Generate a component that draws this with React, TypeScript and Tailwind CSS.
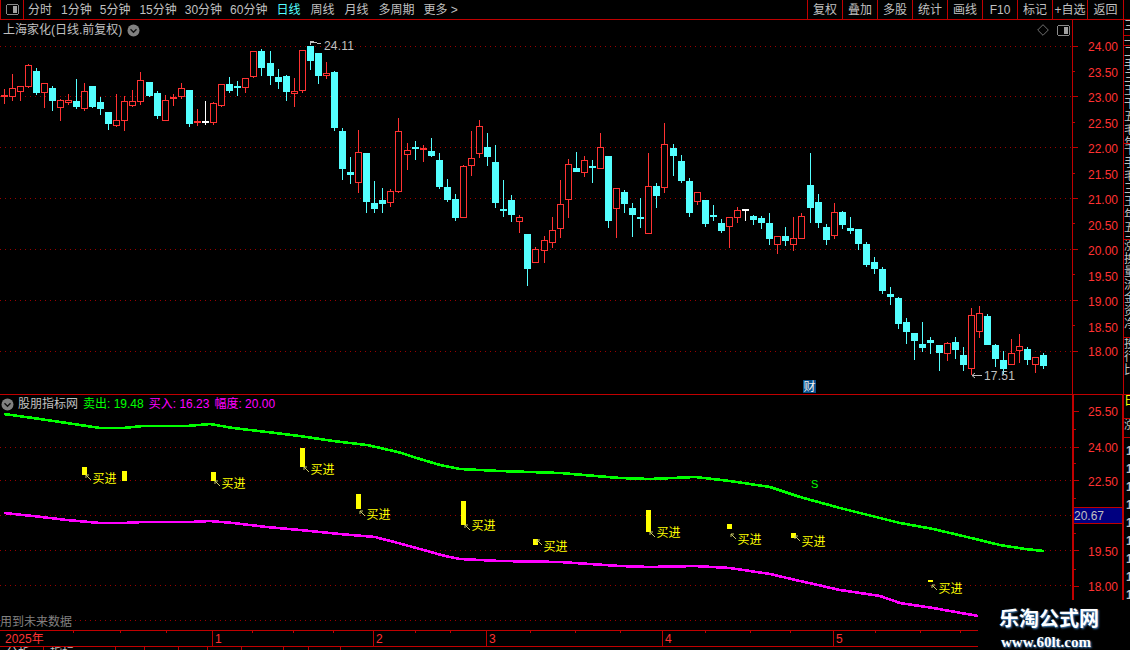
const FONT = '"Liberation Sans","Noto Sans CJK SC",sans-serif';
const RED = "#ff3232";
const CYAN = "#54ffff";
const LINE = "#c00000";
const GRID = "#9a0000";

type C = [string, number, number, number, number];
const D: C[] = [
  ["r",95,97,89,104],["r",88,97,74,101],["r",86,92,86,101],["r",65,87,64,88],["c",71,93,68,95],
  ["r",83,93,83,108],["c",88,101,86,111],["r",100,108,99,121],["r",100,103,94,105],["c",101,107,79,109],
  ["r",91,109,83,111],["c",86,107,86,108],["c",102,109,97,115],["c",112,124,112,130],["r",120,126,94,127],
  ["r",101,121,96,131],["r",101,106,90,107],["r",80,102,72,105],["c",82,96,82,97],["c",93,116,91,119],
  ["r",100,121,95,121],["r",97,99,94,106],["r",88,97,83,99],["c",90,124,90,127],["r",121,123,109,126],
  ["w",121,123,101,125],["r",103,123,102,125],["r",84,106,84,107],["c",84,91,77,93],["c",86,88,81,96],
  ["r",78,88,78,93],["r",51,77,51,78],["c",51,68,49,76],["c",63,76,51,85],["c",77,82,69,89],
  ["c",76,92,75,101],["r",91,94,78,107],["r",50,91,50,93],["c",46,61,46,70],["c",53,76,53,84],
  ["r",73,76,62,79],["c",72,128,71,131],["c",131,169,128,180],["c",172,175,157,184],["r",152,183,130,193],
  ["c",153,202,153,213],["c",203,209,181,213],["c",200,204,188,213],["r",191,203,189,207],["r",131,192,118,193],
  ["r",150,155,143,170],["c",147,149,141,160],["r",148,150,145,162],["c",151,156,138,157],["c",160,187,153,189],
  ["c",187,200,179,202],["c",199,218,194,221],["r",166,218,165,218],["r",158,166,131,176],["r",126,154,120,158],
  ["c",147,157,133,166],["c",162,203,145,208],["c",209,211,180,217],["c",200,215,195,222],["r",217,222,215,233],
  ["c",234,269,234,286],["r",249,263,247,263],["r",240,251,236,263],["r",230,243,217,248],["r",204,229,180,238],
  ["r",164,200,159,218],["c",168,172,152,172],["r",160,173,156,177],["c",166,168,160,183],["r",147,169,133,169],
  ["c",156,221,156,228],["r",188,209,188,238],["c",192,204,190,213],["c",208,215,203,237],["c",217,219,198,228],
  ["r",186,234,153,234],["c",186,196,183,208],["r",144,188,123,193],["c",148,156,144,176],["c",161,181,155,183],
  ["c",181,213,178,217],["r",192,202,192,205],["c",200,224,200,227],["c",215,217,205,221],["c",223,231,219,233],
  ["r",217,227,217,248],["r",210,218,207,223],["w",209,211,209,221],["c",216,220,215,225],["c",218,223,216,229],
  ["c",223,239,213,245],["r",236,245,236,254],["c",236,241,227,246],["r",238,245,217,251],["r",216,239,213,239],
  ["c",185,208,153,223],["c",202,223,194,228],["c",227,240,224,245],["r",212,236,203,239],["c",212,225,211,229],
  ["c",228,231,217,234],["c",229,244,229,250],["c",244,265,242,267],["c",262,269,257,274],["c",269,291,267,294],
  ["c",294,297,287,305],["c",298,324,297,329],["c",322,332,318,344],["c",333,341,333,360],["c",344,348,322,352],
  ["c",340,343,337,354],["c",345,353,345,371],["r",343,354,342,361],["c",342,350,337,359],["c",355,365,347,371],
  ["r",315,369,308,375],["r",313,332,306,338],["c",316,345,314,345],["c",345,359,344,367],["c",360,369,351,374],
  ["r",353,365,339,365],["r",346,351,334,363],["c",349,360,347,365],["r",357,365,357,373],["c",355,366,353,369],
];
const shifts = [18, 33, 50, 67, 83, 100, 116];
const cx = (i: number) => 4 + 8 * i + shifts.filter((s) => i >= s).length;

const green = "4,414 33,418 67,423 100,428 123,428 143,426 187,426 210,424 233,428 267,432 300,436 333,441 367,445 398,452 420,459 440,465 460,469 500,471 560,473 620,478 650,479 695,477 730,481 770,487 800,497 840,508 880,518 900,523 933,529 967,537 1000,545 1025,549 1044,551";
const magenta = "4,513 33,516 67,520 100,523 123,523 143,522 190,522 210,521 233,523 267,527 300,530 340,534 375,537 398,543 420,549 445,556 460,559 500,561 560,562 620,566 650,567 695,566 730,568 770,574 800,581 840,590 880,596 900,603 933,608 967,614 978,616";

const upperLabels: [string, number][] = [["24.00",46],["23.50",72],["23.00",97],["22.50",123],["22.00",148],["21.50",174],["21.00",199],["20.50",225],["20.00",250],["19.50",276],["19.00",301],["18.50",327],["18.00",351]];
const lowerLabels: [string, number][] = [["25.50",411],["24.00",447],["22.50",481],["19.50",551],["18.00",586]];

// x, blockTop, blockBottom, arrowY, textX, textY
const buys: [number, number, number, number, number, number][] = [
  [82,467,475,475,93,478],[211,472,481,481,222,483],[300,448,467,467,311,469],[356,494,509,511,367,514],
  [461,501,525,525,472,525],[533,539,545,540,544,546],[646,510,532,532,657,532],[727,524,529,534,738,539],
  [791,533,538,536,802,541],[928,580,582,585,939,588],
];

const periods: [string, string][] = [["1分钟","ml-[9px]"],["5分钟","ml-[8px]"],["15分钟","ml-[9px]"],["30分钟","ml-[8px]"],["60分钟","ml-[8px]"]];
const periods2 = ["周线", "月线", "多周期"];
const rightBtns = ["复权","叠加","多股","统计","画线","F10","标记","+自选"];

function SplitIcon() {
  return (
    <svg width="13" height="11" viewBox="0 0 13 11" shapeRendering="crispEdges">
      <rect x="0.5" y="0.5" width="12" height="10" rx="2" fill="#000" stroke="#8a8a8a" />
      <rect x="7" y="2" width="4" height="7" fill="#a0a0a0" />
    </svg>
  );
}

function ChevronDot() {
  return (
    <svg width="13" height="13" viewBox="0 0 13 13">
      <circle cx="6.5" cy="6.5" r="6" fill="#808080" />
      <path d="M3.5 5.2 L6.5 8.2 L9.5 5.2" fill="none" stroke="#111" strokeWidth="1.4" />
    </svg>
  );
}

function Candles() {
  return (
    <g shapeRendering="crispEdges">
      {D.map(([k, top, bot, hi, lo], i) => {
        const c = cx(i);
        const color = k === "c" ? CYAN : k === "w" ? "#ffffff" : RED;
        const flat = bot - top <= 2;
        return (
          <g key={i}>
            <rect x={c} y={hi} width={1} height={lo - hi} fill={color} />
            {k === "r" && !flat ? (
              <rect x={c - 2.5} y={top + 0.5} width={6} height={bot - top - 1} fill="#000" stroke={color} />
            ) : (
              <rect x={c - 3} y={top} width={7} height={bot - top} fill={color} />
            )}
          </g>
        );
      })}
    </g>
  );
}

function StripSection({ h, chars, color = "#c0c0c0" }: { h: string; chars: string; color?: string }) {
  return (
    <div className={`${h} border-b border-[#c00000] overflow-hidden`}>
      {chars.split("").map((t, i) => (
        <div key={i} className="text-[12px] leading-[13px] whitespace-nowrap" style={{ color }}>{t}</div>
      ))}
    </div>
  );
}

export default function App() {
  return (
    <div className="relative flex h-[650px] w-[1130px] flex-col overflow-hidden bg-black" style={{ fontFamily: FONT }}>
      {/* toolbar */}
      <div className="flex h-[20px] items-center justify-between border-b border-[#c00000] text-[12px] leading-none text-[#c0c0c0]">
        <div className="flex items-center">
          <div className="flex h-[19px] w-[24px] items-center justify-center border-x border-[#c00000]"><SplitIcon /></div>
          <span className="ml-[4px]">分时</span>
          {periods.map(([t, m]) => (<span key={t} className={m}>{t}</span>))}
          <span className="ml-[9px] text-[#54ffff]">日线</span>
          {periods2.map((t) => (<span key={t} className="ml-[10px]">{t}</span>))}
          <span className="ml-[9px]">更多 &gt;</span>
        </div>
        <div className="flex h-[19px]">
          {rightBtns.map((t) => (
            <div key={t} className="flex w-[35px] items-center justify-center border-l border-[#c00000] whitespace-nowrap">{t}</div>
          ))}
          <div className="flex w-[37px] items-center justify-center border-x border-[#c00000]">返回</div>
          <div className="w-[6px]" />
        </div>
      </div>

      <div className="flex">
        <div className="w-[1124px]">
          {/* price pane */}
          <div className="relative h-[374px]">
            <svg width="1124" height="374" viewBox="0 20 1124 374" className="block">
              <g shapeRendering="crispEdges">
                {[46, 96, 147, 198, 249, 300, 351].map((y) => (
                  <g key={y}>
                    <line x1="0" x2="1072" y1={y + 0.5} y2={y + 0.5} stroke={GRID} strokeDasharray="1 4" />
                    <rect x="1073" y={y} width="5" height="1" fill={LINE} />
                  </g>
                ))}
                {[71, 122, 173, 223, 274, 325].map((y) => (<rect key={y} x="1073" y={y} width="2" height="1" fill={LINE} />))}
                <rect x="1072" y="20" width="1" height="374" fill={LINE} />
                <rect x="1123" y="20" width="1" height="374" fill={LINE} />
              </g>
              <Candles />
              {upperLabels.map(([t, y]) => (
                <text key={t} x="1118" y={y + 5} textAnchor="end" fontSize="12" fill={RED}>{t}</text>
              ))}
              <path d="M310.5 45 V41 H314 M311 42 H316 L318 44 L321 43" fill="none" stroke="#c0c0c0" strokeWidth="1" shapeRendering="crispEdges" />
              <text x="324" y="50" fontSize="12" fill="#c0c0c0" letterSpacing="0.2">24.11</text>
              <path d="M972 375.5 H982 M972 375.5 L975 373 M972 375.5 L975 378" fill="none" stroke="#c0c0c0" strokeWidth="1" />
              <text x="984" y="380" fontSize="12" fill="#c0c0c0" letterSpacing="0.2">17.51</text>
              <rect x="803" y="380" width="13" height="13" fill="#08508c" />
              <text x="803.5" y="391" fontSize="12" fill="#f0f0f0">财</text>
            </svg>
            <div className="absolute left-[3px] top-[1px] flex items-center text-[12px] leading-[18px] text-[#c0c0c0]">
              <span>上海家化(日线.前复权)</span>
              <span className="ml-[5px] flex"><ChevronDot /></span>
            </div>
            <div className="absolute right-[54px] top-[4px] flex items-center gap-[8px]">
              <svg width="12" height="12" viewBox="0 0 12 12"><path d="M6 0.7 L11.3 6 L6 11.3 L0.7 6 Z" fill="none" stroke="#707070" /></svg>
              <SplitIcon />
            </div>
          </div>

          {/* indicator pane */}
          <div className="relative h-[236px]">
            <svg width="1124" height="236" viewBox="0 394 1124 236" className="block">
              <g shapeRendering="crispEdges">
                <rect x="0" y="394" width="1124" height="1" fill={LINE} />
                {[447, 480, 515, 550, 585, 620].map((y) => (
                  <line key={y} x1="0" x2="1072" y1={y + 0.5} y2={y + 0.5} stroke={GRID} strokeDasharray="1 4" />
                ))}
                {[447, 480, 515, 550, 586, 411].map((y) => (<rect key={y} x="1074" y={y} width="5" height="1" fill={LINE} />))}
                {[429, 463, 498, 533, 569].map((y) => (<rect key={y} x="1074" y={y} width="2" height="1" fill={LINE} />))}
                <rect x="1072" y="394" width="2" height="236" fill={LINE} />
                <rect x="1122" y="394" width="2" height="236" fill={LINE} />
                <polyline points={green} fill="none" stroke="#00ff00" strokeWidth="2.6" />
                <polyline points={magenta} fill="none" stroke="#ff00ff" strokeWidth="2.6" />
                {buys.map(([x, t, b]) => (<rect key={x} x={x} y={t} width="5" height={b - t} fill="#ffff00" />))}
                <rect x="122" y="471" width="5" height="10" fill="#ffff00" />
              </g>
              {buys.map(([x, , , ay, tx, ty]) => (
                <g key={x}>
                  <path d={`M${x + 4} ${ay} L${x + 9} ${ay + 5} M${x + 4} ${ay} h3 M${x + 4} ${ay} v3`} fill="none" stroke="#c8c864" strokeWidth="1" />
                  <text x={tx - 0.5} y={ty + 5} fontSize="12" fill="#ffff00">买进</text>
                </g>
              ))}
              <text x="811" y="488" fontSize="11" fill="#00ff00">S</text>
              {lowerLabels.map(([t, y]) => (
                <text key={t} x="1118" y={y + 5} textAnchor="end" fontSize="12" fill={RED}>{t}</text>
              ))}
              <rect x="1074" y="507" width="48" height="16" fill="#000080" />
              <rect x="1074" y="507" width="48" height="1" fill={LINE} shapeRendering="crispEdges" />
              <rect x="1074" y="523" width="48" height="1" fill={LINE} shapeRendering="crispEdges" />
              <text x="1074" y="520" fontSize="12" fill="#c0c0c0">20.67</text>
            </svg>
            <div className="absolute left-[1px] top-[2px] flex items-center text-[12px] leading-[16px] text-[#c0c0c0]">
              <ChevronDot />
              <span className="ml-[4px]">股朋指标网</span>
              <span className="ml-[5px] text-[#00ff00]">卖出: 19.48</span>
              <span className="ml-[5px] text-[#ff00ff]">买入: 16.23</span>
              <span className="ml-[5px] text-[#ff00ff]">幅度: 20.00</span>
            </div>
            <div className="absolute bottom-[1px] left-0 text-[12px] leading-[14px] text-[#808080]">用到未来数据</div>
          </div>

          {/* time axis */}
          <svg width="1124" height="17" viewBox="0 630 1124 17" className="block">
            <g shapeRendering="crispEdges">
              <rect x="0" y="630" width="1124" height="1" fill={LINE} />
              <rect x="0" y="646" width="1124" height="1" fill={LINE} />
              {[212, 373, 486, 662, 833].map((x) => (<rect key={x} x={x} y="630" width="1" height="16" fill={LINE} />))}
              {[73, 120, 166, 252, 293, 333, 415, 450, 530, 575, 620, 705, 750, 790, 875, 920, 960].map((x) => (
                <rect key={x} x={x} y="631" width="1" height="2" fill={LINE} />
              ))}
            </g>
            <text x="5" y="643" fontSize="12" fill={RED}>2025年</text>
            {([["1",215],["2",376],["3",489],["4",665],["5",836]] as [string, number][]).map(([t, x]) => (
              <text key={t} x={x} y="643" fontSize="12" fill={RED}>{t}</text>
            ))}
          </svg>

          {/* tab strip, only its top edge shows */}
          <div className="flex h-[3px] overflow-hidden text-[12px] leading-[12px] text-[#c0c0c0]">
            <div className="w-[43px] pl-[6px]">分析</div>
            <div className="w-[72px] border-l border-[#c00000] pl-[6px]">指标</div>
            <div className="w-[29px] border-l border-[#c00000]" />
            <div className="w-[34px] border-l border-[#c00000]" />
            <div className="w-[29px] border-l border-[#c00000]" />
            <div className="w-[34px] border-l border-[#c00000]" />
            <div className="w-[42px] border-l border-[#c00000]" />
            <div className="w-[25px] border-l border-[#c00000]" />
            <div className="w-[32px] border-l border-[#c00000]" />
            <div className="w-[24px] border-l border-[#c00000]" />
          </div>
        </div>

        {/* clipped side panel */}
        <div className="h-[630px] w-[6px] overflow-hidden">
          <StripSection h="h-[16px]" chars="三" />
          <StripSection h="h-[10px]" chars="一" />
          <StripSection h="h-[98px]" chars="二手三王干五毛年" />
          <StripSection h="h-[96px]" chars="千手毛三王年五二" />
          <StripSection h="h-[98px]" chars="涨换量流金资净" />
          <StripSection h="h-[57px]" chars="投行比" />
          <StripSection h="h-[24px]" chars="日" color="#ffff00" />
          <StripSection h="h-[19px]" chars="涨" />
          <div className="pt-[7px]">
            {Array.from({ length: 9 }).map((_, i) => (
              <div key={i} className="h-[18px] pl-[2px] text-[12px] font-bold leading-[13px] text-[#c0c0c0]">1</div>
            ))}
          </div>
        </div>
      </div>

      {/* watermark */}
      <div className="absolute bottom-0 right-0 flex h-[50px] w-[152px] flex-col items-start bg-black pl-[21px] pt-[4px] text-white">
        <div className="text-[20px] font-bold leading-[30px] whitespace-nowrap [text-shadow:1px_1px_2px_#4a90d0]">乐淘公式网</div>
        <div className="pl-[2px] text-[15px] font-bold leading-[16px] whitespace-nowrap [text-shadow:1px_1px_2px_#4a90d0]" style={{ fontFamily: '"Liberation Serif",serif' }}>www.60lt.com</div>
      </div>
    </div>
  );
}
